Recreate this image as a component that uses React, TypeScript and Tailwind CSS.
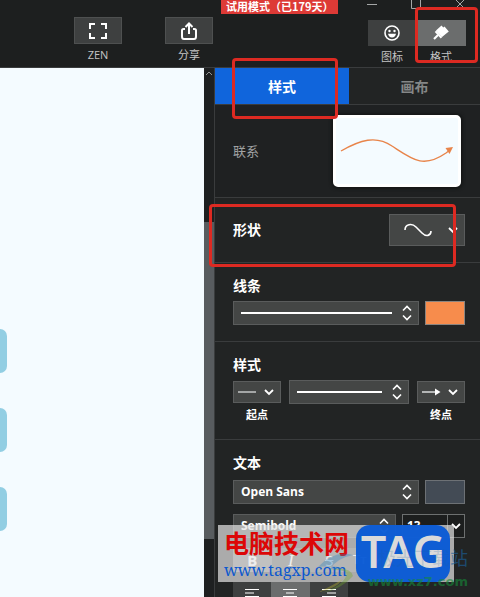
import { useState } from 'react';
import type { ReactNode } from 'react';

const sans = "font-['Open_Sans','Noto_Sans_CJK_SC',sans-serif]";
const control = 'bg-[#444645] border border-[#5a5c5c] text-white';

function Chevron() {
  return (
    <svg width="10" height="8" viewBox="0 0 10 8" fill="none" stroke="currentColor" strokeWidth="1.8">
      <path d="M1 2 L5 6 L9 2" />
    </svg>
  );
}

function UpDown() {
  return (
    <svg width="10" height="16" viewBox="0 0 10 16" fill="none" stroke="currentColor" strokeWidth="1.6">
      <path d="M1 5.5 L5 1.5 L9 5.5 M1 10.5 L5 14.5 L9 10.5" />
    </svg>
  );
}

function ToolButton({ label, children }: { label: string; children: ReactNode }) {
  return (
    <button className="flex flex-col items-center">
      <span className="w-12 h-[27px] bg-[#3e4040] border border-[#4e5050] flex items-center justify-center text-white">
        {children}
      </span>
      <span className="mt-0.5 text-[11px] leading-[18px] text-[#c4c4c4]">{label}</span>
    </button>
  );
}

function Section({ title, className, children }: { title: string; className: string; children: ReactNode }) {
  return (
    <section className={`pl-[18px] pr-[15px] border-b border-[#3a3c3d] ${className}`}>
      <h2 className="text-[14px] leading-5 font-bold text-white">{title}</h2>
      {children}
    </section>
  );
}

function LineSelect({ label, className }: { label: string; className: string }) {
  return (
    <button aria-label={label} className={`h-6 pl-[7px] pr-1.5 flex items-center gap-2.5 ${control} ${className}`}>
      <span className="flex-1 h-0.5 bg-white" />
      <UpDown />
    </button>
  );
}

function FontSelect({ label, options, className }: { label: string; options: string[]; className: string }) {
  return (
    <div className={`relative ${className}`}>
      <select
        aria-label={label}
        className={`appearance-none block w-full h-6 pl-[7px] pr-5 text-[12px] leading-5 font-bold rounded-none ${control}`}
      >
        {options.map((o) => (
          <option key={o}>{o}</option>
        ))}
      </select>
      <span className="absolute right-[7px] top-1 text-white pointer-events-none">
        <UpDown />
      </span>
    </div>
  );
}

function Highlight({ className }: { className: string }) {
  return <div className={`absolute z-20 border-[3px] border-[#dd2a22] rounded-[4px] pointer-events-none ${className}`} />;
}

function AlignIcon({ d }: { d: string }) {
  return (
    <svg width="16" height="14" viewBox="0 0 16 14" stroke="white" strokeWidth="1.2" fill="none">
      <path d={d} />
    </svg>
  );
}

function Header() {
  return (
    <header className="relative h-[68px] shrink-0 flex justify-between bg-[#1d1f1f] border-b border-[#3a3c3d]">
      <div className="flex gap-[43px] pl-[74px] pt-[17px]">
        <ToolButton label="ZEN">
          <svg width="18" height="16" viewBox="0 0 18 16" fill="none" stroke="currentColor" strokeWidth="2">
            <path d="M1 6V1H6M12 1H17V6M17 10V15H12M6 15H1V10" />
          </svg>
        </ToolButton>
        <ToolButton label="分享">
          <svg width="18" height="18" viewBox="0 0 18 18" fill="none" stroke="currentColor" strokeWidth="2">
            <path d="M5 7H3.5Q2 7 2 8.500V14.500Q2 17 4 17H14Q16 17 16 14.500V8.500Q16 7 14.500 7H13M9 12V2M5.500 5L9 1.500L12.500 5" />
          </svg>
        </ToolButton>
      </div>

      <div className="absolute left-[221px] top-0 w-[117px] h-[14px] bg-[#dd3a36] text-white text-[11px] leading-[12px] font-bold whitespace-nowrap pl-[5px] font-['Noto_Sans_CJK_SC',sans-serif]">
        试用模式（已179天）
      </div>

      <div className="absolute right-[14px] top-0 flex gap-[32px] text-[#a5a7a7]">
        <button aria-label="最小化">
          <svg width="12" height="10" viewBox="0 0 12 10" fill="none" stroke="currentColor"><path d="M1 4.500H11" /></svg>
        </button>
        <button aria-label="最大化">
          <svg width="12" height="10" viewBox="0 0 12 10" fill="none" stroke="currentColor"><path d="M1.500 0V8.500H10.500V0" /></svg>
        </button>
        <button aria-label="关闭">
          <svg width="12" height="10" viewBox="0 0 12 10" fill="none" stroke="currentColor"><path d="M2 0L10 8M10 0L2 8" /></svg>
        </button>
      </div>

      <div className="flex items-start pt-5 pr-[14px] text-[#c4c4c4] text-[11px] leading-[18px]">
        <button className="flex flex-col items-center">
          <span className="w-12 h-[26px] bg-[#3e4040] flex items-center justify-center">
            <svg width="16" height="16" viewBox="0 0 16 16" fill="none" stroke="white" strokeWidth="1.6">
              <circle cx="8" cy="8" r="7" />
              <path d="M4 8.800H12Q11.300 12.400 8 12.400Q4.700 12.400 4 8.800Z" fill="white" stroke="none" />
              <circle cx="5.500" cy="6" r="1.200" fill="white" stroke="none" />
              <circle cx="10.500" cy="6" r="1.200" fill="white" stroke="none" />
            </svg>
          </span>
          <span className="mt-0.5">图标</span>
        </button>
        <button className="flex flex-col items-center">
          <span className="w-[50px] h-[26px] bg-[#6b6d6d] flex items-center justify-center">
            <svg width="16" height="16" viewBox="0 0 16 16" fill="white">
              <path d="M8.500 0.500L10.300 2.500L11.500 1.500L15.800 6.500L9 12L3 5.500Z" />
              <path d="M2.500 6.300L8.500 12.700" stroke="white" strokeWidth="2" />
              <path d="M5 10L1 14" stroke="white" strokeWidth="2.2" />
            </svg>
          </span>
          <span className="mt-0.5 h-4">格式</span>
        </button>
      </div>
      <Highlight className="right-0.5 top-[7px] w-[63px] h-[56px]" />
    </header>
  );
}

function Watermarks() {
  return (
    <>
      <div className="absolute z-30 left-[3px] top-[457px] w-[236px] h-[57px] bg-[#e6e6e6]/70 flex pointer-events-none">
        <div className="pl-1.5 w-[138px] whitespace-nowrap">
          <div className="text-[25px] leading-[34px] font-bold text-[#dc0707] font-['Noto_Sans_CJK_SC',sans-serif]">电脑技术网</div>
          <div className="text-[16px] leading-[22px] text-[#0b58cf] font-['Noto_Serif','DejaVu_Serif','Liberation_Serif',serif]">
            www.tagxp.com
          </div>
        </div>
        <div className="w-[94px] h-[57px] rounded-[14px] bg-[#0658d6]/95 flex items-center justify-center text-[45px] leading-[52px] pb-[5px] font-semibold text-[#dadada] font-['Noto_Sans',sans-serif]">
          TAG
        </div>
      </div>
      <div className="absolute z-30 right-[12px] top-[478px] w-[150px] h-14 opacity-60 pointer-events-none">
        <svg className="absolute left-0 top-1 opacity-60" width="36" height="46" viewBox="0 0 36 46">
          <path d="M0 17Q16 0 35 5Q19 8 12 19Q30 20 32 25Q27 14 0 17Z" fill="#2f86c4" />
          <path d="M12 20Q36 18 25 31Q17 39 3 43Q23 40 35 26Q32 16 12 20Z" fill="#70a82b" />
          <path d="M1 42Q17 34 25 29Q18 39 1 42Z" fill="#c2bd2c" />
        </svg>
        <div className="absolute right-0 top-0 text-[18px] leading-6 text-[#1a63a0] whitespace-nowrap">
          <span className="opacity-30">极光下载</span>站
        </div>
        <div className="absolute right-0 top-[26px] text-[13px] leading-5 font-semibold text-[#168a38] font-['DejaVu_Sans',sans-serif]">
          www.xz7.com
        </div>
      </div>
    </>
  );
}

export default function App() {
  const [tab, setTab] = useState<'style' | 'canvas'>('style');

  return (
    <div className={`h-screen flex flex-col overflow-hidden bg-[#222424] ${sans}`}>
      <Header />

      <div className="flex-1 min-h-0 flex">
        <main className="flex-1 min-w-0 bg-[#f4fbff] overflow-hidden">
          <div className="pt-[261px] flex flex-col gap-[35px]">
            <div className="w-[7px] h-11 rounded-r-[7px] bg-[#92cee3]" />
            <div className="w-[7px] h-11 rounded-r-[7px] bg-[#92cee3]" />
            <div className="w-[7px] h-11 rounded-r-[7px] bg-[#92cee3]" />
          </div>
        </main>

        <div className="w-[10px] shrink-0 bg-[#1e2021] flex flex-col items-center">
          <svg className="mt-0.5" width="8" height="6" viewBox="0 0 8 6" fill="none" stroke="#929494">
            <path d="M1 5L4 2L7 5" />
          </svg>
          <div className="mt-[146px] w-full h-[317px] bg-[#585c5f]" />
        </div>

        <aside className="relative w-[266px] shrink-0 border-l border-[#3a3c3d] bg-[#222424]">
          <div role="tablist" className="h-[37px] flex border-b border-[#3a3c3d]">
            <button
              role="tab"
              aria-selected={tab === 'style'}
              onClick={() => setTab('style')}
              className={`w-[134px] text-[14px] font-bold ${tab === 'style' ? 'bg-[#1065dc] text-white' : 'text-[#858787]'}`}
            >
              样式
            </button>
            <button
              role="tab"
              aria-selected={tab === 'canvas'}
              onClick={() => setTab('canvas')}
              className={`flex-1 text-[14px] font-bold ${tab === 'canvas' ? 'bg-[#1065dc] text-white' : 'text-[#858787]'}`}
            >
              画布
            </button>
          </div>

          <div className="h-[93px] pl-[18px] pr-[19px] flex items-center justify-between bg-[#1f2122] border-b border-[#3a3c3d]">
            <span className="text-[13px] leading-5 text-[#a0a2a2]">联系</span>
            <div className="w-32 h-[72px] rounded-[5px] border-[3px] border-white bg-[#f4fbff] shadow-[0_0_3px_2px_#151717]">
              <svg width="122" height="66" viewBox="0 0 122 66" fill="none" stroke="#e8844a" strokeWidth="1.4">
                <path d="M5 33C24 22 40 17 56 28C76 41 87 51 110 35L114 32" />
                <path d="M109.500 30L117 29L113.500 36Z" fill="#e8844a" stroke="none" />
              </svg>
            </div>
          </div>

          <Section title="形状" className="h-[65px] flex items-center justify-between">
            <button aria-label="选择形状" className={`w-[76px] h-8 pl-3.5 pr-1.5 flex items-center justify-between ${control}`}>
              <svg width="28" height="15" viewBox="0 0 28 15" fill="none" stroke="white" strokeWidth="1.6">
                <path d="M1 7C1 1 8 0 12 4L18 10C22 14 27 13 27 8" />
              </svg>
              <Chevron />
            </button>
          </Section>

          <Section title="线条" className="h-[79px] pt-[13px]">
            <div className="mt-[5px] flex gap-1.5">
              <LineSelect label="线条粗细" className="flex-1" />
              <button aria-label="线条颜色" className="w-10 h-6 bg-[#f78c4c] border border-[#8b8580]" />
            </div>
          </Section>

          <Section title="样式" className="h-[98px] pt-[13px]">
            <div className="mt-[5px] flex gap-2 items-start">
              <div className="flex flex-col items-center">
                <button id="start" aria-labelledby="start-label" className={`mt-px w-12 h-[22px] px-1 pr-1.5 flex items-center justify-between ${control}`}>
                  <span className="w-[18px] h-0.5 bg-[#a4a6a6]" />
                  <Chevron />
                </button>
                <label id="start-label" htmlFor="start" className="mt-0.5 text-[11px] leading-5 font-semibold text-white">起点</label>
              </div>
              <LineSelect label="线型" className="flex-1" />
              <div className="flex flex-col items-center">
                <button id="end" aria-labelledby="end-label" className={`mt-px w-12 h-[22px] px-1 pr-1.5 flex items-center justify-between ${control}`}>
                  <svg width="19" height="8" viewBox="0 0 19 8">
                    <path d="M0 4H14" stroke="#b4b6b6" strokeWidth="2" />
                    <path d="M13 0.500L18.500 4L13 7.500Z" fill="white" />
                  </svg>
                  <Chevron />
                </button>
                <label id="end-label" htmlFor="end" className="mt-0.5 text-[11px] leading-5 font-semibold text-white">终点</label>
              </div>
            </div>
          </Section>

          <Section title="文本" className="pt-[13px] border-b-0">
            <div className="mt-[7px] flex gap-1.5">
              <FontSelect label="字体" options={['Open Sans', 'Roboto', 'Lato']} className="flex-1" />
              <button aria-label="文本颜色" className="w-10 h-6 bg-[#434b55] border border-[#6d7175]" />
            </div>
            <div className="mt-2.5 flex gap-1.5">
              <FontSelect label="字重" options={['Semibold', 'Regular', 'Bold']} className="flex-1" />
              <div className="w-[63px] h-6 flex border border-[#6d7070] text-white bg-[#1c1e1e]">
                <input
                  aria-label="字号"
                  defaultValue="13"
                  className="w-[45px] pl-1 text-[12px] font-bold bg-transparent border-r border-[#6d7070]"
                />
                <button aria-label="选择字号" className="flex-1 flex items-center justify-center">
                  <Chevron />
                </button>
              </div>
            </div>
            <div className="mt-2.5 w-[154px] flex h-6 text-[15px] text-white">
              <button aria-label="粗体" className="flex-1 bg-[#6b6d6d] font-bold">B</button>
              <button aria-label="斜体" className="flex-1 bg-[#444645] italic text-[17px] font-['Liberation_Serif',serif]">I</button>
              <button aria-label="删除线" className="flex-1 bg-[#444645] line-through">S</button>
              <button aria-label="大小写" className="flex-1 bg-[#444645] flex items-center justify-center gap-1.5 text-[13px]">
                Tт <Chevron />
              </button>
            </div>
            <div className="mt-2.5 w-[115px] h-[27px] flex">
              <button aria-label="左对齐" className="flex-1 bg-[#3e4040] flex items-center justify-center">
                <AlignIcon d="M1 0.500H15M1 4H10M1 7.500H15M1 11H10" />
              </button>
              <button aria-label="居中" className="flex-1 bg-[#6b6d6d] flex items-center justify-center">
                <AlignIcon d="M1 0.500H15M4 4H12M1 7.500H15M4 11H12" />
              </button>
              <button aria-label="右对齐" className="flex-1 bg-[#3e4040] flex items-center justify-center">
                <AlignIcon d="M1 0.500H15M6 4H15M1 7.500H15M6 11H15" />
              </button>
            </div>
          </Section>

          <Highlight className="left-[17px] -top-[10px] w-[106px] h-[61px]" />
          <Highlight className="-left-[6px] top-[136px] w-[247px] h-[63px]" />
          <Watermarks />
        </aside>
      </div>
    </div>
  );
}
